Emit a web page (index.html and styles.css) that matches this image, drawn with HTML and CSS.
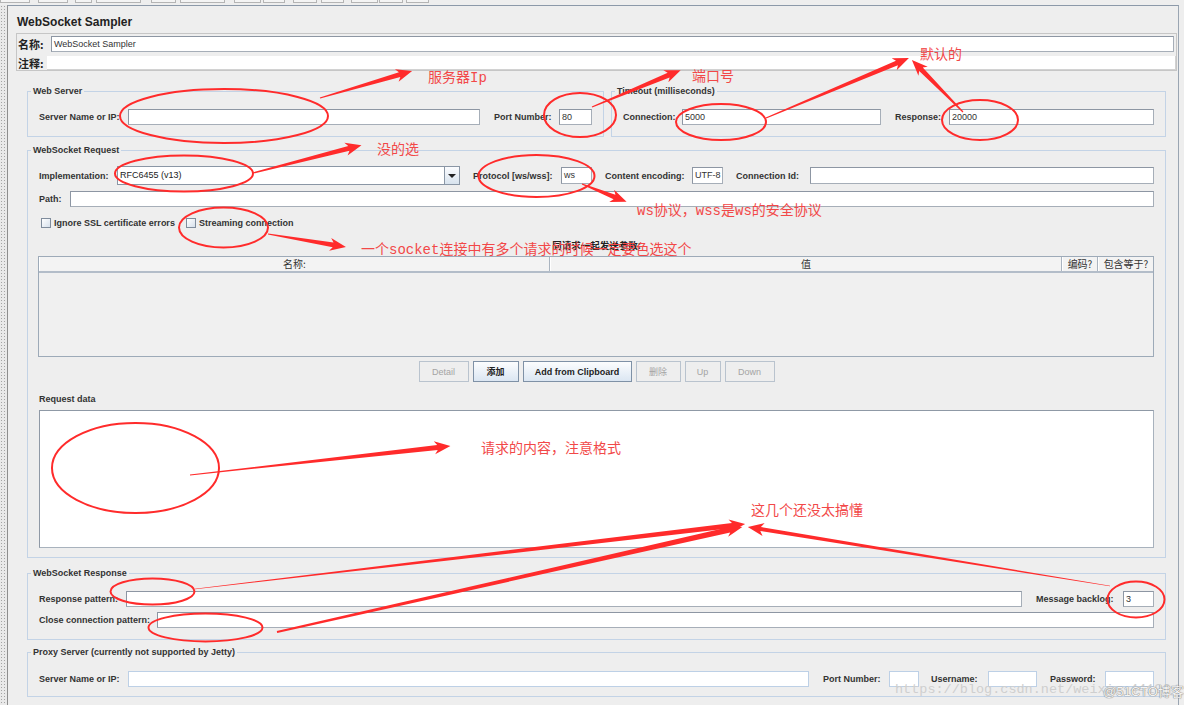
FILE: index.html
```html
<!DOCTYPE html>
<html>
<head>
<meta charset="utf-8">
<title>WebSocket Sampler</title>
<link rel="stylesheet" href="styles.css">
</head>
<body>
<div class="topstrip">
  <span class="tb"></span><span class="tb"></span><span class="tb"></span><span class="tb"></span><span class="tb"></span><span class="tb"></span><span class="tb"></span><span class="tb"></span><span class="tb"></span><span class="tb"></span><span class="tb"></span><span class="tb"></span><span class="tb"></span>
</div>
<div class="main">
  <div class="splitter"></div>
  <div class="panel">
    <div class="title">WebSocket Sampler</div>
    <div class="namebox">
      <div class="namerow"><span class="nlbl">名称:</span><div class="inp nameinp">WebSocket Sampler</div></div>
      <div class="commentrow"><span class="clbl">注释:</span><div class="comment"></div></div>
    </div>

    <div class="toprow">
      <fieldset class="fs fs-ws">
        <legend>Web Server</legend>
        <div class="fsbody b-ws">
          <div class="row">
            <span class="lbl w89">Server Name or IP:</span><div class="inp grow"></div>
            <span class="lbl w65 gapl14">Port Number:</span><div class="inp w33">80</div>
          </div>
        </div>
      </fieldset>
      <fieldset class="fs fs-to">
        <legend>Timeout (milliseconds)</legend>
        <div class="fsbody b-ws">
          <div class="row">
            <span class="lbl w59">Connection:</span><div class="inp w199">5000</div>
            <span class="lbl w54 gapl14">Response:</span><div class="inp grow">20000</div>
          </div>
        </div>
      </fieldset>
    </div>

    <fieldset class="fs fs-req">
      <legend>WebSocket Request</legend>
      <div class="fsbody b-req">
        <div class="row row19">
          <span class="lbl w78">Implementation:</span>
          <div class="combo"><span class="val">RFC6455 (v13)</span><span class="arrowbtn"><span class="tri"></span></span></div>
          <span class="lbl w88 gapl13">Protocol [ws/wss]:</span><div class="inp w31 h17">ws</div>
          <span class="lbl w87 gapl13">Content encoding:</span><div class="inp w31 h17">UTF-8</div>
          <span class="lbl w74 gapl13">Connection Id:</span><div class="inp grow h17"></div>
        </div>
        <div class="row mt6">
          <span class="lbl w31">Path:</span><div class="inp grow"></div>
        </div>
        <div class="row mt8 chkrow">
          <span class="chk chk1"><span class="cb"></span><span class="lbl">Ignore SSL certificate errors</span></span>
          <span class="chk"><span class="cb"></span><span class="lbl">Streaming connection</span></span>
        </div>
        <div class="params">同请求一起发送参数:</div>
        <div class="table">
          <div class="thead">
            <span class="th">名称:</span><span class="th">值</span><span class="th">编码?</span><span class="th">包含等于?</span>
          </div>
          <div class="tbody"></div>
        </div>
        <div class="buttons">
          <span class="btn dis b50">Detail</span>
          <span class="btn on b46">添加</span>
          <span class="btn on b109">Add from Clipboard</span>
          <span class="btn dis b45">删除</span>
          <span class="btn dis b36">Up</span>
          <span class="btn dis b50">Down</span>
        </div>
        <div class="reqlabel">Request data</div>
        <div class="reqdata"></div>
      </div>
    </fieldset>

    <fieldset class="fs fs-resp">
      <legend>WebSocket Response</legend>
      <div class="fsbody b-resp">
        <div class="row">
          <span class="lbl w87">Response pattern:</span><div class="inp grow"></div>
          <span class="lbl w87 gapl14">Message backlog:</span><div class="inp w31">3</div>
        </div>
        <div class="row mt5">
          <span class="lbl w118">Close connection pattern:</span><div class="inp grow"></div>
        </div>
      </div>
    </fieldset>

    <fieldset class="fs fs-proxy">
      <legend>Proxy Server (currently not supported by Jetty)</legend>
      <div class="fsbody b-proxy">
        <div class="row">
          <span class="lbl w89">Server Name or IP:</span><div class="inp pinp grow"></div>
          <span class="lbl w66 gapl14">Port Number:</span><div class="inp pinp w30"></div>
          <span class="lbl w57 gapl12">Username:</span><div class="inp pinp w49"></div>
          <span class="lbl w55 gapl13">Password:</span><div class="inp pinp w49"></div>
        </div>
      </div>
    </fieldset>
  </div>
</div>

<div class="wm1">https://blog.csdn.net/weixin_44196</div>
<div class="wm2">@51CTO博客</div>

<svg class="notes" width="1184" height="705" viewBox="0 0 1184 705" xmlns="http://www.w3.org/2000/svg">
  <g class="ell">
    <ellipse cx="224" cy="116" rx="104" ry="27"/>
    <ellipse cx="580" cy="115" rx="36" ry="22"/>
    <ellipse cx="721" cy="122" rx="45" ry="18"/>
    <ellipse cx="980" cy="120" rx="38" ry="20"/>
    <ellipse cx="184" cy="173.5" rx="69" ry="18"/>
    <ellipse cx="536.5" cy="176" rx="58" ry="21"/>
    <ellipse cx="223.5" cy="227.5" rx="44.5" ry="20"/>
    <ellipse cx="135.5" cy="468" rx="83.5" ry="45"/>
    <ellipse cx="152.5" cy="591.5" rx="42" ry="13"/>
    <ellipse cx="205.5" cy="627.5" rx="57" ry="14"/>
    <ellipse cx="1136" cy="599.5" rx="28.5" ry="18"/>
  </g>
  <g class="arr">
    <path transform="translate(320,98) rotate(-16.36)" d="M0,-0.6 L83,-2.5 L80,-6.5 L96,0 L80,6.5 L83,2.5 L0,0.6Z"/>
    <path transform="translate(592,107) rotate(-22.57)" d="M0,-0.6 L83,-2.5 L80,-6.5 L96,0 L80,6.5 L83,2.5 L0,0.6Z"/>
    <path transform="translate(766,118) rotate(-22.76)" d="M0,-0.6 L142,-2.5 L139,-6.5 L155,0 L139,6.5 L142,2.5 L0,0.6Z"/>
    <path transform="translate(963,112) rotate(-134.45)" d="M0,-0.6 L60,-2.5 L57,-6.5 L73,0 L57,6.5 L60,2.5 L0,0.6Z"/>
    <path transform="translate(253,173) rotate(-14.41)" d="M0,-0.6 L99,-2.5 L96,-6.5 L112,0 L96,6.5 L99,2.5 L0,0.6Z"/>
    <path transform="translate(582,184) rotate(21.8)" d="M0,-0.6 L35,-2.5 L32,-6.5 L48,0 L32,6.5 L35,2.5 L0,0.6Z"/>
    <path transform="translate(268,234) rotate(9.46)" d="M0,-0.6 L66,-2.5 L63,-6.5 L79,0 L63,6.5 L66,2.5 L0,0.6Z"/>
    <path transform="translate(190,475) rotate(-6.36)" d="M0,-0.4 L249,-2.5 L246,-6.5 L262,0 L246,6.5 L249,2.5 L0,0.4Z"/>
    <path transform="translate(195,589) rotate(-6.74)" d="M0,-0.3 L541,-2.6 L538,-6.5 L554,0 L538,6.5 L541,2.6 L0,0.3Z"/>
    <path transform="translate(277,632) rotate(-12.72)" d="M0,-1 L464,-2.8 L461,-6.5 L477,0 L461,6.5 L464,2.8 L0,1Z"/>
    <path transform="translate(1110,586) rotate(-170.74)" d="M0,-0.3 L354,-2 L351,-6.5 L367,0 L351,6.5 L354,2 L0,0.3Z"/>
  </g>
  <g class="ntext">
    <text x="428" y="78">服务器Ip</text>
    <text x="692" y="77">端口号</text>
    <text x="920" y="55">默认的</text>
    <text x="377" y="150">没的选</text>
    <text x="637" y="211">ws协议，wss是ws的安全协议</text>
    <text x="361" y="250">一个socket连接中有多个请求的时候一定要色选这个</text>
    <text x="481" y="449">请求的内容，注意格式</text>
    <text x="751" y="511">这几个还没太搞懂</text>
  </g>
</svg>
</body>
</html>
```
FILE: styles.css
```css
* { box-sizing: border-box; }
html, body { margin: 0; padding: 0; }
body {
  width: 1184px;
  height: 705px;
  overflow: hidden;
  position: relative;
  background: #eeeeee;
  color: #333;
  font-family: "Liberation Sans", "Noto Sans CJK SC", sans-serif;
  font-size: 9px;
}

/* top toolbar remnants */
.topstrip { height: 5px; display: flex; align-items: flex-start; }
.tb { height: 3px; border: 1px solid #b4b4b4; border-top: none; background: #f4f4f4; }
.tb:nth-child(1) { width: 30px; margin-right: 8px; }
.tb:nth-child(2) { width: 30px; margin-right: 7px; }
.tb:nth-child(3) { width: 17px; margin-right: 4px; }
.tb:nth-child(4) { width: 45px; margin-right: 10px; }
.tb:nth-child(5) { width: 25px; margin-right: 4px; }
.tb:nth-child(6) { width: 45px; margin-right: 9px; }
.tb:nth-child(7) { width: 27px; margin-right: 2px; }
.tb:nth-child(8) { width: 22px; margin-right: 8px; }
.tb:nth-child(9) { width: 24px; margin-right: 4px; }
.tb:nth-child(10) { width: 23px; margin-right: 7px; }
.tb:nth-child(11) { width: 27px; margin-right: 1px; }
.tb:nth-child(12) { width: 24px; margin-right: 3px; }
.tb:nth-child(13) { width: 23px; }

.main { display: flex; height: 700px; }
.splitter {
  width: 7px;
  background-color: #e9e9e9;
  background-image: radial-gradient(circle, #a4a4a4 0.7px, transparent 1px);
  background-size: 3px 3px;
}
.panel {
  width: 1172px;
  border-left: 1px solid #8e8e8e;
  border-top: 1px solid #8c99a9;
  border-right: 1px solid #9aa5b2;
}

.title {
  height: 27px;
  padding: 8px 0 0 9px;
  line-height: 17px;
  font-weight: bold;
  font-size: 12px;
  color: #222;
}

.namebox {
  margin: 0 1px 0 8px;
  height: 38px;
  border: 1px solid #c6c6c6;
  padding: 2px 0 0 1px;
}
.namerow, .commentrow { display: flex; align-items: center; }
.namerow { height: 16px; }
.commentrow { height: 14px; margin-top: 4px; }
.nlbl, .clbl { font-family: "Noto Sans CJK SC", sans-serif; font-weight: bold; font-size: 11px; color: #222; line-height: 14px; }
.nlbl { width: 33px; }
.clbl { width: 29px; }
.nameinp { flex: 1; margin-right: 2px; border-color: #7d8795; }
.comment { flex: 1; height: 14px; background: #fff; border-right: 1px solid #d2d2d2; border-bottom: 1px solid #d2d2d2; }

/* inputs */
.inp {
  height: 16px;
  background: #fff;
  border: 1px solid #a6aeb8;
  border-top-color: #8d96a3;
  border-left-color: #8d96a3;
  font-size: 9px;
  line-height: 14px;
  padding-left: 2px;
  color: #333;
  white-space: nowrap;
  overflow: hidden;
}
.inp.h17 { height: 17px; line-height: 15px; }
.pinp { border-color: #bdd0e6; }
.grow { flex: 1; min-width: 0; }
.w30 { width: 30px; } .w31 { width: 31px; } .w33 { width: 33px; } .w49 { width: 49px; } .w199 { width: 199px; }

/* labels */
.lbl { font-weight: bold; line-height: 14px; white-space: nowrap; color: #333; flex: none; }
.w31.lbl { width: 31px; } .w54 { width: 54px; } .w55 { width: 55px; } .w57 { width: 57px; } .w59 { width: 59px; }
.w65 { width: 65px; } .w66 { width: 66px; } .w74 { width: 74px; } .w78 { width: 78px; } .w87 { width: 87px; }
.w88 { width: 88px; } .w89 { width: 89px; } .w118 { width: 118px; }
.gapl12 { margin-left: 12px; } .gapl13 { margin-left: 13px; } .gapl14 { margin-left: 14px; }

.row { display: flex; align-items: center; height: 16px; }
.row19 { height: 19px; }
.mt5 { margin-top: 5px; } .mt6 { margin-top: 6px; } .mt8 { margin-top: 8px; }

/* fieldsets */
.fs {
  margin: 0;
  padding: 0;
  min-width: 0;
  border: 1px solid #c3d3e6;
}
.fs legend {
  margin-left: 3px;
  padding: 0 2px;
  height: 14px;
  line-height: 14px;
  font-weight: bold;
  color: #333;
}
.fsbody { padding: 0 11px; }
.toprow { display: flex; gap: 7px; margin: 13px 12px 0 19px; }
.fs-ws { width: 577px; flex: none; }
.fs-to { flex: 1; }
.b-ws { padding-top: 11px; padding-bottom: 11px; }
.fs-req { margin: 6px 12px 0 19px; }
.b-req { padding-top: 9px; padding-bottom: 9px; }
.fs-resp { margin: 8px 12px 0 19px; }
.b-resp { padding-top: 11px; padding-bottom: 11px; }
.fs-proxy { margin: 5px 12px 0 19px; }
.b-proxy { padding-top: 12px; padding-bottom: 9px; }

/* combo */
.combo {
  display: flex;
  width: 343px;
  height: 19px;
  flex: none;
  background: #fff;
  border: 1px solid #8a96a5;
}
.combo .val { flex: 1; padding-left: 2px; line-height: 17px; font-size: 9px; color: #222; }
.arrowbtn {
  width: 15px;
  border-left: 1px solid #8a96a5;
  background: linear-gradient(#fbfcfe, #d8e3ee);
  display: flex;
  align-items: center;
  justify-content: center;
}
.tri { width: 0; height: 0; border-left: 4px solid transparent; border-right: 4px solid transparent; border-top: 4px solid #222; }

/* checkboxes */
.chkrow { height: 16px; padding-left: 2px; }
.chk { display: flex; align-items: center; gap: 3px; }
.chk1 { width: 145px; flex: none; }
.cb { width: 10px; height: 10px; border: 1px solid #7f8c9c; background: linear-gradient(135deg, #ffffff, #d6e0eb); flex: none; }
.chk .lbl { font-weight: bold; }

.params {
  margin-top: 7px;
  height: 14px;
  line-height: 14px;
  text-align: center;
  font-family: "Noto Sans CJK SC", sans-serif;
  font-weight: bold;
  font-size: 9.5px;
  color: #222;
}

/* table */
.table {
  margin: 4px 0 0 -1px;
  height: 101px;
  border: 1px solid #9daab8;
  background: #f0f0f0;
  display: flex;
  flex-direction: column;
}
.thead {
  display: grid;
  grid-template-columns: 511px 512px 36px 1fr;
  height: 16px;
  border-bottom: 2px solid #b3bdc9;
  background: #f3f3f3;
}
.th {
  border-right: 1px solid #aab4c0;
  border-left: 1px solid #ffffff;
  text-align: center;
  font-family: "Noto Sans CJK SC", sans-serif;
  font-size: 10px;
  line-height: 14px;
  color: #333;
  white-space: nowrap;
}
.th:last-child { border-right: none; }
.tbody { flex: 1; }

/* buttons */
.buttons { display: flex; justify-content: center; gap: 4px; margin-top: 4px; height: 21px; }
.btn {
  height: 21px;
  display: flex;
  align-items: center;
  justify-content: center;
  font-size: 9px;
  white-space: nowrap;
}
.btn.on {
  background: linear-gradient(#fcfdfe, #dbe6f2);
  border: 1px solid #7f91a6;
  font-weight: bold;
  color: #222;
}
.btn.dis {
  background: #eeeeee;
  border: 1px solid #b9c3ce;
  color: #a4a4a4;
}
.b36 { width: 36px; } .b45 { width: 45px; } .b46 { width: 46px; } .b50 { width: 50px; } .b109 { width: 109px; }

.reqlabel { margin-top: 10px; height: 14px; line-height: 14px; font-weight: bold; color: #333; }
.reqdata {
  margin-top: 4px;
  height: 138px;
  background: #fff;
  border: 1px solid #a8b2bd;
  border-top-color: #8f99a6;
  border-left-color: #8f99a6;
}

/* watermark */
.wm1 {
  position: absolute;
  left: 895px;
  top: 681px;
  font-family: "Liberation Mono", monospace;
  font-size: 13.5px;
  line-height: 18px;
  color: #cfcfcf;
  white-space: nowrap;
}
.wm2 {
  position: absolute;
  left: 1103px;
  top: 683px;
  font-family: "Liberation Sans", "Noto Sans CJK SC", sans-serif;
  font-size: 13px;
  line-height: 18px;
  color: #f4f4f4;
  text-shadow: 0 0 1px #777, 0 0 1px #777;
  white-space: nowrap;
}

/* annotations */
.notes { position: absolute; left: 0; top: 0; pointer-events: none; }
.ell ellipse { fill: none; stroke: #ff2b2b; stroke-width: 2; }
.arr path { fill: #ff2b2b; }
.ntext text {
  fill: #f24848;
  font-family: "Liberation Mono", "Noto Sans CJK SC", monospace;
  font-size: 14px;
  dominant-baseline: central;
}
```
